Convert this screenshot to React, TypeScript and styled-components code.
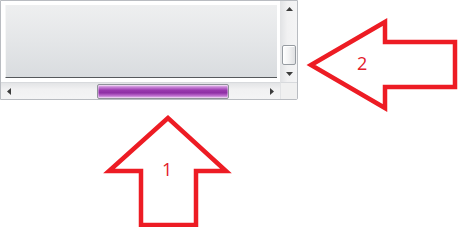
import React from 'react';
import styled, {createGlobalStyle} from 'styled-components';

const GlobalStyle = createGlobalStyle`
    html, body {
        margin: 0;
        padding: 0;
        background: #ffffff;
    }
`;

const Canvas = styled.div`
    position: relative;
    width: 458px;
    height: 227px;
    background: #ffffff;
    font-family: 'Open Sans', 'Liberation Sans', sans-serif;
`;

const Frame = styled.div`
    display: grid;
    grid-template-columns: 279px 17px;
    grid-template-rows: 81px 17px;
    width: 296px;
    border: 1px solid #b9bcc1;
    border-radius: 0 0 2px 0;
    background: #ffffff;
`;

const Content = styled.div`
    padding: 4px 3px 4px 4px;
`;

const Panel = styled.div`
    height: 100%;
    box-sizing: border-box;
    background: linear-gradient(to bottom, #eeeff0 0%, #e4e6e8 50%, #d9dcdf 100%);
    border-left: 1px solid #f6f7f7;
    border-bottom: 1px solid #56595c;
`;

const VBar = styled.div`
    display: flex;
    flex-direction: column;
    background: linear-gradient(to right, #e3e4e6 0%, #f1f1f2 40%, #f4f4f5 100%);
    border-left: 1px solid #e2e3e5;
`;

const HBar = styled.div`
    display: flex;
    flex-direction: row;
    background: linear-gradient(to bottom, #e3e4e6 0%, #f1f1f2 40%, #f4f4f5 100%);
    border-top: 1px solid #d8dadd;
`;

const Corner = styled.div`
    background: #f0f0f0;
    border-top: 1px solid #d8dadd;
    border-left: 1px solid #e2e3e5;
`;

const ArrowButton = styled.div`
    flex: 0 0 17px;
    display: flex;
    align-items: center;
    justify-content: center;
`;

const Track = styled.div<{$vertical?: boolean}>`
    flex: 1;
    display: flex;
    flex-direction: ${p => (p.$vertical ? 'column' : 'row')};
    justify-content: ${p => (p.$vertical ? 'flex-end' : 'flex-start')};
    align-items: center;
`;

const VThumb = styled.div`
    width: 14px;
    height: 20px;
    box-sizing: border-box;
    border: 1px solid #979ca2;
    border-radius: 2px;
    background: linear-gradient(to right, #ffffff 0%, #f2f2f3 50%, #dfe0e2 100%);
    box-shadow: inset 1px 1px 0 #ffffff;
`;

const HThumb = styled.div<{$offset: number; $size: number}>`
    margin-left: ${p => p.$offset}px;
    width: ${p => p.$size}px;
    height: 15px;
    box-sizing: border-box;
    border: 1px solid #8f9399;
    border-radius: 2px;
    background: linear-gradient(
        to bottom,
        #e9c8ef 0%,
        #c57fd4 18%,
        #9a3aaf 40%,
        #8e2fa4 60%,
        #b865c9 80%,
        #e6c0ee 100%
    );
    box-shadow: inset 0 0 0 1px rgba(255, 255, 255, 0.35);
`;

const Glyph = styled.svg`
    width: 7px;
    height: 7px;
    fill: #3c3c3c;
`;

const Overlay = styled.svg`
    position: absolute;
    left: 0;
    top: 0;
    pointer-events: none;
`;

const Label = styled.text`
    font-family: 'Open Sans', 'Liberation Sans', sans-serif;
    font-size: 18px;
    fill: #e3202a;
`;

function Tri({dir}: {dir: 'up' | 'down' | 'left' | 'right'}) {
    const points = {
        up: '3.5,1 7,5 0,5',
        down: '0,2 7,2 3.5,6',
        left: '1,3.5 5,0 5,7',
        right: '2,0 6,3.5 2,7',
    }[dir];
    return (
        <Glyph viewBox="0 0 7 7">
            <polygon points={points}/>
        </Glyph>
    );
}

export default function App() {
    return (
        <Canvas>
            <GlobalStyle/>
            <Frame>
                <Content>
                    <Panel/>
                </Content>
                <VBar>
                    <ArrowButton><Tri dir="up"/></ArrowButton>
                    <Track $vertical>
                        <VThumb/>
                    </Track>
                    <ArrowButton><Tri dir="down"/></ArrowButton>
                </VBar>
                <HBar>
                    <ArrowButton><Tri dir="left"/></ArrowButton>
                    <Track>
                        <HThumb $offset={79} $size={132}/>
                    </Track>
                    <ArrowButton><Tri dir="right"/></ArrowButton>
                </HBar>
                <Corner/>
            </Frame>
            <Overlay width="458" height="227" viewBox="0 0 458 227">
                <polygon
                    points="168,118 109,171 141,171 141,225 196,225 196,171 226,171"
                    fill="none"
                    stroke="#ed1c24"
                    strokeWidth="4.5"
                    strokeLinejoin="miter"
                />
                <Label x="162" y="176">1</Label>
                <polygon
                    points="311,65 385,22 385,42 455,42 455,87 385,87 385,108"
                    fill="none"
                    stroke="#ed1c24"
                    strokeWidth="4.5"
                    strokeLinejoin="miter"
                />
                <Label x="357" y="70">2</Label>
            </Overlay>
        </Canvas>
    );
}
